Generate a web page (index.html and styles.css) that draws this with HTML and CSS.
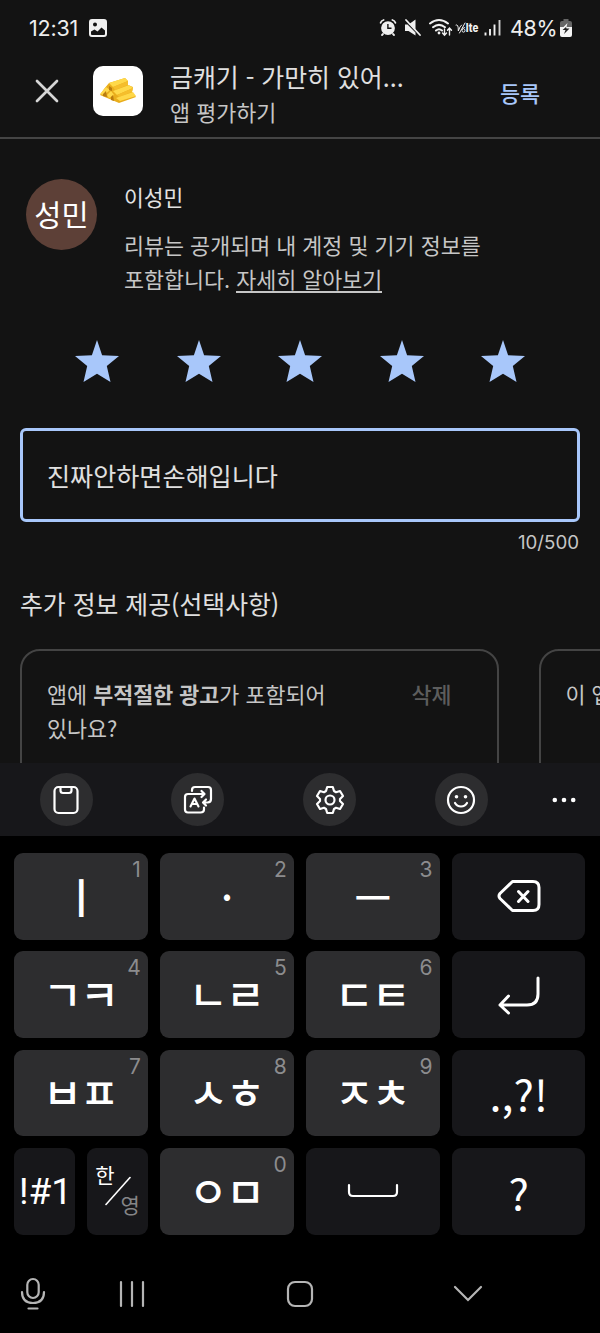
FILE: index.html
```html
<!DOCTYPE html>
<html lang="ko">
<head>
<meta charset="utf-8">
<title>앱 평가하기</title>
<link rel="stylesheet" href="styles.css">
</head>
<body>
<div class="screen">
  <main class="app">
    <div class="status">
      <span class="clock">12:31</span>
      <svg class="pic" width="18" height="18" viewBox="0 0 18 18"><path fill="#f0f0f0" fill-rule="evenodd" d="M3 0H15Q18 0 18 3V15Q18 18 15 18H3Q0 18 0 15V3Q0 0 3 0ZM6 3.5A2 2 0 1 0 6 7.5A2 2 0 1 0 6 3.5ZM2 12.5V15Q2 16 3 16H15Q16 16 16 15V11.5L12.5 8.5L8.5 12.5L5.5 10.5Z"/></svg>
      <svg class="tray" width="118" height="22" viewBox="0 0 118 22" fill="none" stroke="#f0f0f0" stroke-width="1.8" stroke-linecap="round">
        <path fill="#f0f0f0" stroke="none" fill-rule="evenodd" d="M9 4.2A6.9 6.9 0 1 1 9 18A6.9 6.9 0 1 1 9 4.2ZM8.2 7V12H12.5V10.6H9.6V7Z"/>
        <path d="M1.6 5.8Q2.3 3.6 4.6 3M16.4 5.8Q15.7 3.6 13.4 3M4 17L3 18M14 17L15 18"/>
        <path fill="#f0f0f0" stroke="none" d="M26 7.500H29.500L36.500 2.500V13L31 7.500L28.500 7.500L26 8ZM26 8V14H29.5L36.5 18.5V15.500L28.500 7.500Z"/>
        <path d="M27 3L41 18"/>
        <path stroke-width="2" d="M51 6.5Q60 -.5 69 6.5M54 10.2Q60 5.5 66 10.2M57 13.5Q60 11 63 13.5"/>
        <circle cx="60" cy="16" r="1.4" fill="#f0f0f0" stroke="none"/>
        <path stroke-width="1.4" d="M65.500 12V18M63.5 16L65.5 18.2L67.5 16M70.5 18V11.5M68.5 13.3L70.5 11L72.5 13.3"/>
        <path stroke-width="1" d="M77 8Q79.500 6.500 79.300 14Q81 9 82.500 8M86 6L80.500 16M85.500 10.500Q83 11 83 13.500A1.500 1.700 0 1 0 84.800 11.800"/>
        <text class="lte" x="86.800" y="15.200" textLength="12.500" lengthAdjust="spacingAndGlyphs">lte</text>
        <path stroke-width="1.900" stroke-linecap="butt" d="M106.500 15.500V18.500M111 12V18.500M115.500 7.500V18.500"/>
      </svg>
      <svg class="last-bar" width="4" height="22" viewBox="0 0 4 22"><path d="M1.500 3V18.500" stroke="#d0d0d0" stroke-width="1.900"/></svg>
      <span class="percent">48%</span>
      <svg class="battery" width="12" height="18" viewBox="0 0 12 18"><path fill="#666" d="M3.500 2V0H8.500V2H10Q12 2 12 4V9H0V4Q0 2 2 2Z"/><path fill="#f4f4f4" d="M0 8H12V16Q12 18 10 18H2Q0 18 0 16Z"/><path fill="#f4f4f4" d="M7.500 4L2.500 9H9.500L6.500 8Z"/><path fill="#222" d="M6 8L2.500 11H5.500L4 15L9.500 9.500H6.500Z"/></svg>
    </div>
    <header class="appbar">
      <svg class="close" width="24" height="24" viewBox="0 0 24 24"><path d="M2 2L22 22M22 2L2 22" stroke="#d6d6d6" stroke-width="2.700" stroke-linecap="round"/></svg>
      <div class="logo">
        <svg width="38" height="26" viewBox="0 0 38 26">
          <path fill="#e9ad1c" d="M10 5L26 0L29 3V7L34 9L33 14L37 19L20 25L1 17L5 11Z"/>
          <path fill="#ffd94a" d="M10 5L26 0L29 3L14 9Z"/><path fill="#f5be2c" d="M14 9L29 3V7L16 12Z"/>
          <path fill="#ffd94a" d="M14 13L30 7L34 10L18 17Z"/><path fill="#f5be2c" d="M18 17L34 10L33 14L20 19Z"/>
          <path fill="#ffd849" d="M17 20L34 14L37 18L21 23Z"/>
          <path fill="#ffd849" d="M1 16L7 9L11 12L5 17ZM8 17L12 13L15 17L10 20Z"/>
          <path fill="#b97c10" d="M4 16L7 13L8 19L4 18ZM12 19L14 17L15 23L12 22ZM10 8L13 10V13L10 12Z"/>
        </svg>
      </div>
      <div class="titles">
        <div class="title">금캐기 - 가만히 있어...</div>
        <div class="subtitle">앱 평가하기</div>
      </div>
      <div class="submit">등록</div>
    </header>
    <section class="profile">
      <div class="avatar">성민</div>
      <div>
        <div class="name">이성민</div>
        <div class="notice">리뷰는 공개되며 내 계정 및 기기 정보를<br>포함합니다. <span class="link">자세히 알아보기</span></div>
      </div>
    </section>
    <div class="stars">
      <svg viewBox="0 0 44 42"><path d="M22 0L27.100 15.200L44 16L31.800 26L35.500 42L22 33.700L8.500 42L12.200 26L0 16L16.900 15.200Z"/></svg>
      <svg viewBox="0 0 44 42"><path d="M22 0L27.100 15.200L44 16L31.800 26L35.500 42L22 33.700L8.500 42L12.200 26L0 16L16.900 15.200Z"/></svg>
      <svg viewBox="0 0 44 42"><path d="M22 0L27.100 15.200L44 16L31.800 26L35.500 42L22 33.700L8.500 42L12.200 26L0 16L16.900 15.200Z"/></svg>
      <svg viewBox="0 0 44 42"><path d="M22 0L27.100 15.200L44 16L31.800 26L35.500 42L22 33.700L8.500 42L12.200 26L0 16L16.900 15.200Z"/></svg>
      <svg viewBox="0 0 44 42"><path d="M22 0L27.100 15.200L44 16L31.800 26L35.500 42L22 33.700L8.500 42L12.200 26L0 16L16.900 15.200Z"/></svg>
    </div>
    <div class="review">진짜안하면손해입니다</div>
    <div class="counter">10/500</div>
    <h2 class="more">추가 정보 제공(선택사항)</h2>
    <div class="cards">
      <div class="card">
        <p class="question">앱에 <b>부적절한 광고</b>가 포함되어<br>있나요?</p>
        <span class="clear">삭제</span>
      </div>
      <div class="card"><p class="question">이 앱</p></div>
    </div>
  </main>
  <section class="keyboard">
    <div class="toolbar">
      <span class="tool"><svg width="32" height="32" viewBox="0 0 32 32"><rect x="4.500" y="3" width="23" height="26" rx="4"/><path d="M10.500 3V6.500Q10.500 9 13 9H19Q21.500 9 21.500 6.500V3"/></svg></span>
      <span class="tool"><svg width="32" height="32" viewBox="0 0 32 32"><path d="M10 7V6Q10 3 13 3H26Q29 3 29 6V15Q29 18.500 25.500 18.500H21.500M24 15.500L21 18.500L24 21.500M11.500 10H6Q3 10 3 13V25.500Q3 28.500 6 28.500H18.500Q22 28.500 22 25.500V23.500M11.500 10H22M19.500 7L22.500 10L19.500 13"/><path d="M8.500 22.500L12.500 14.500L16.500 22.500M10 20H15" stroke-width="2.100"/></svg></span>
      <span class="tool"><svg width="32" height="32" viewBox="0 0 32 32"><path d="M13.200 3H18.800L20 7L22 8.200L26 7L29 12L26 15V17L29 20L26 25L22 23.800L20 25L18.800 29H13.200L12 25L10 23.800L6 25L3 20L6 17V15L3 12L6 7L10 8.200L12 7Z"/><circle cx="16" cy="16" r="4.500"/></svg></span>
      <span class="tool"><svg width="32" height="32" viewBox="0 0 32 32"><circle cx="16" cy="16" r="13"/><path d="M10 19Q12 22.500 16 22.500T22 19"/><g fill="#fff" stroke="none"><circle cx="11.500" cy="12.700" r="1.800"/><circle cx="20.500" cy="12.700" r="1.800"/></g></svg></span>
      <svg class="dots" width="24" height="6" viewBox="0 0 24 6" fill="#fff"><circle cx="2.800" cy="3" r="2.300"/><circle cx="12" cy="3" r="2.300"/><circle cx="21.200" cy="3" r="2.300"/></svg>
    </div>
    <div class="keys">
      <div class="key"><span class="jamo tall">ㅣ</span><span class="hint">1</span></div>
      <div class="key"><span class="jamo dot">·</span><span class="hint">2</span></div>
      <div class="key"><span class="jamo bar">ㅡ</span><span class="hint">3</span></div>
      <div class="key dark"><svg width="46" height="34" viewBox="0 0 46 34"><path d="M16.500 2.500H37Q43 2.500 43 8.500V25.500Q43 31.500 37 31.500H16.500L4 19.500Q2 17 4 14.500ZM22.500 12.500L32 22.500M32 12.500L22.500 22.500"/></svg></div>
      <div class="key"><span class="jamo">ㄱㅋ</span><span class="hint">4</span></div>
      <div class="key"><span class="jamo">ㄴㄹ</span><span class="hint">5</span></div>
      <div class="key"><span class="jamo">ㄷㅌ</span><span class="hint">6</span></div>
      <div class="key dark"><svg width="46" height="40" viewBox="0 0 46 40"><path d="M42 3V19Q42 30 31 30H4M12.500 21L4 30L12.500 38"/></svg></div>
      <div class="key"><span class="jamo">ㅂㅍ</span><span class="hint">7</span></div>
      <div class="key"><span class="jamo">ㅅㅎ</span><span class="hint">8</span></div>
      <div class="key"><span class="jamo">ㅈㅊ</span><span class="hint">9</span></div>
      <div class="key dark"><span class="punct">.,?!</span></div>
      <div class="pair">
        <div class="key dark"><span class="symbols">!#1</span></div>
        <div class="key dark lang"><span class="ko">한</span><svg width="26" height="30" viewBox="0 0 26 30"><path d="M1 28.500L25 1.500"/></svg><span class="en">영</span></div>
      </div>
      <div class="key"><span class="jamo">ㅇㅁ</span><span class="hint">0</span></div>
      <div class="key dark"><svg width="52" height="16" viewBox="0 0 52 16"><path class="space" d="M2 2V9Q2 13 6 13H46Q50 13 50 9V2"/></svg></div>
      <div class="key dark"><span class="punct">?</span></div>
    </div>
    <nav class="nav">
      <svg width="26" height="34" viewBox="0 0 26 34"><rect x="7.300" y="2" width="11.400" height="19" rx="5.700"/><path d="M2 15Q2 26 13 26T24 15M8.500 31.500H17.500"/></svg>
      <svg width="26" height="28" viewBox="0 0 26 28"><path d="M2 2V26M13 2V26M24 2V26"/></svg>
      <svg width="28" height="28" viewBox="0 0 28 28"><rect x="2" y="2" width="24" height="24" rx="7"/></svg>
      <svg width="30" height="18" viewBox="0 0 30 18"><path d="M2 2L15 15L28 2"/></svg>
    </nav>
  </section>
</div>
</body>
</html>
```
FILE: styles.css
```css
* { box-sizing: border-box; }
body { margin: 0; background: #000; font-family: "Noto Sans CJK KR", sans-serif; }
svg { display: block; flex: none; }
.screen { width: 600px; height: 1333px; overflow: hidden; white-space: nowrap; }
.app { height: 763px; overflow: hidden; background: #131313; color: #c6c6c6; }

.status { height: 55px; padding: 0 28px 0 29px; display: flex; align-items: center; color: #eee; font-family: Inter, sans-serif; }
.clock { width: 60px; font-size: 21.500px; letter-spacing: -.2px; }
.tray { margin-left: auto; }
.lte { font: 800 11.500px Inter, sans-serif; fill: #f0f0f0; stroke: none; }
.last-bar { margin-left: 1px; }
.percent { width: 48px; margin: 0 2px 0 8px; font-size: 21.500px; letter-spacing: -.4px; }

.appbar { height: 84px; display: flex; border-bottom: 2px solid #454545; }
.close { margin: 24px 0 0 34.500px; }
.logo { width: 50px; height: 50px; margin: 11px 0 0 34.500px; border-radius: 10px; background: #fff; display: grid; place-items: center; }
.titles { width: 300px; margin: 3px 0 0 27px; }
.title { font-size: 24.900px; line-height: 36px; color: #e0e0e0; }
.subtitle { font-size: 21.800px; line-height: 36px; }
.submit { margin: 20px 0 0 30px; font-size: 21.800px; font-weight: 500; line-height: 36px; color: #a8c7fa; }

.profile { height: 191px; padding: 40px 0 0 26px; display: flex; gap: 27px; font-size: 21.750px; line-height: 34px; }
.avatar { width: 71px; height: 71px; border-radius: 50%; background: #5d4037; color: #fff; font-size: 29.500px; line-height: 68px; text-align: center; }
.name { margin: 1px 0 14px; font-size: 21.500px; color: #e2e2e2; }
.link { display: inline-block; height: 31px; line-height: 34px; border-bottom: 2px solid #c6c6c6; }

.stars { height: 98px; padding: 10px 75px 0; display: flex; justify-content: space-between; }
.stars svg { width: 44px; height: 42px; fill: #a8c7fa; }
.review { height: 94px; margin: 0 20px; padding-left: 24px; border: 3px solid #a8c7fa; border-radius: 6px; font-size: 25.100px; line-height: 88px; color: #e0e0e0; }
.counter { height: 40px; padding-right: 21px; font: 18.700px/41px Inter, sans-serif; text-align: right; }
.more { height: 87px; margin: 0; padding: 23px 0 0 20px; font-size: 24.850px; font-weight: 400; line-height: 36px; color: #e0e0e0; }
.cards { display: flex; gap: 40px; padding-left: 20px; }
.card { flex: none; width: 478.500px; height: 160px; padding: 26px 45px 0 25px; border: 2px solid #444; border-radius: 20px; display: flex; justify-content: space-between; font-size: 21.750px; line-height: 34px; }
.question { margin: 0; }
.clear { color: #5d5d5d; font-weight: 500; }

.keyboard { height: 570px; background: #000; }
.toolbar { height: 73px; background: #17171a; padding: 0 24px 0 39.500px; display: flex; align-items: center; }
.tool { width: 53px; height: 53px; margin-right: 78.800px; border-radius: 50%; background: #2d2d2f; display: grid; place-items: center; }
.tool svg { fill: none; stroke: #fff; stroke-width: 2.200; stroke-linecap: round; stroke-linejoin: round; }
.tool:nth-child(4) { margin-right: 64px; }
.keys { display: grid; grid-template-columns: repeat(4, 133.500px); grid-auto-rows: 86.700px; gap: 11.600px 12.400px; padding: 17px 0 0 14.300px; }
.key { position: relative; display: flex; align-items: center; justify-content: center; border-radius: 9px; background: #2d2d2f; color: #fff; }
.dark { background: #17171a; }
.key svg { fill: none; stroke: #fff; stroke-width: 3; stroke-linecap: round; stroke-linejoin: round; }
.key svg .space { stroke-width: 2.200; }
.jamo { font-size: 42.500px; font-weight: 500; line-height: 40px; letter-spacing: -2px; padding: 0 2px 3px 0; }
.tall { font-size: 42px; padding: 0; letter-spacing: 0; }
.dot { font-size: 40px; padding: 0; letter-spacing: 0; }
.bar { font-size: 40px; padding: 0; letter-spacing: 0; }
.hint { position: absolute; top: 4px; right: 7px; font: 21px/25px Inter, sans-serif; color: #8c8c8e; }
.punct { font-size: 43px; line-height: 50px; padding-top: 1px; }
.pair { display: grid; grid-template-columns: 60.500px 60.500px; gap: 12.500px; }
.symbols { font: 37px/44px Roboto, sans-serif; padding: 2px 0 0 2px; }
.key.lang svg { stroke-width: 1.600; }
.ko, .en { position: absolute; font-size: 21px; line-height: 24px; }
.ko { left: 8px; top: 14px; }
.en { right: 8px; bottom: 19px; color: #858587; }
.nav { display: flex; align-items: center; height: 118px; padding: 0 117px 0 20px; }
.nav svg { fill: none; stroke: #b5b5b5; stroke-width: 2.200; stroke-linecap: round; }
.nav svg:nth-child(2) { margin-left: 73px; }
.nav svg:nth-child(3) { margin-left: 141px; }
.nav svg:nth-child(4) { margin-left: auto; }
```
